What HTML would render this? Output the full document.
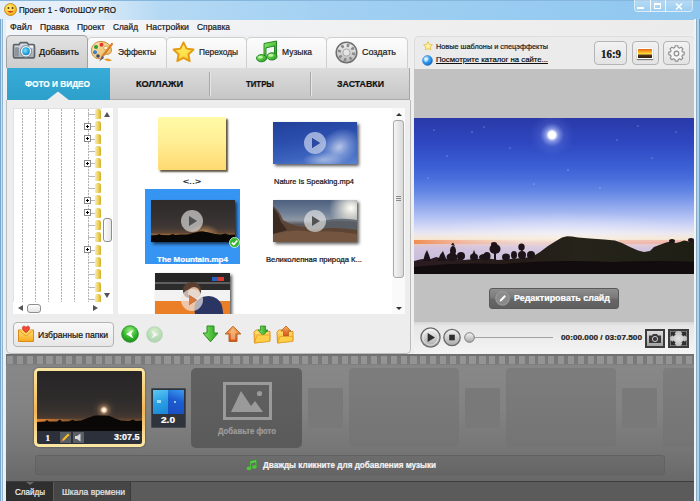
<!DOCTYPE html>
<html lang="ru">
<head>
<meta charset="utf-8">
<title>Проект 1 - ФотоШОУ PRO</title>
<style>
*{box-sizing:border-box;margin:0;padding:0}
html,body{width:700px;height:501px;overflow:hidden;background:#c9dcee}
body{font-family:"Liberation Sans","DejaVu Sans",sans-serif;font-size:11px;color:#111;position:relative}
#win{position:absolute;left:0;top:0;width:700px;height:501px;overflow:hidden}
#win div,#win span,#win svg,#win a{position:absolute;display:block}
.t{white-space:nowrap;line-height:12px;height:12px;transform-origin:0 50%;-webkit-text-stroke:.22px}
.b{font-weight:bold}
/* frame */
#title{left:0;top:0;width:700px;height:20px;background:linear-gradient(90deg,#e4eef9 0,#e6f0fa 12%,#cde4f6 17%,#b4d9f4 23%,#a0cff2 50%,#8fc7ef 100%);border-top:1px solid #86b6dc}
#frameL{left:0;top:19px;width:5.6px;height:482px;background:linear-gradient(90deg,#7aa6c8 0,#7aa6c8 .8px,#d6e5f2 .8px,#c4d9ec 2.4px,#8cb6d9 2.4px,#8cb6d9 3.4px,#eef1f4 3.4px,#e9ecf0 5.6px)}
#frameR{left:694.3px;top:19px;width:5.7px;height:482px;background:linear-gradient(90deg,#f3f4f6 0,#f0f1f4 2.5px,#8caac4 2.5px,#8caac4 3.3px,#a8d6f2 3.3px,#a8d6f2 5.1px,#6f9cbc 5.1px,#6f9cbc 5.7px)}
#menubar{left:5px;top:20px;width:690px;height:15px;background:linear-gradient(90deg,#f3f6fb,#efefef 60%,#ebebeb)}
#client{left:5px;top:35px;width:690px;height:319px;background:#efefef}
.wb{top:0;height:12px;border:1px solid rgba(255,255,255,.5);border-top:none;background:linear-gradient(rgba(255,255,255,.35),rgba(255,255,255,.12))}
/* main tabs */
.mtab{top:37px;height:31px;border:1px solid #cfcfcf;border-bottom:none;border-radius:5px 5px 0 0;background:linear-gradient(#fcfcfc,#eeeeee)}
.mtab.act{top:35px;height:33px;background:linear-gradient(#e2e2e2,#cdcdcd);border-color:#a2a2a2}
.ml{top:46px;font-size:11px;color:#1a1a1a}
/* subtabs */
#subtabs{left:7px;top:68px;width:403px;border-right:1px solid #a4a4a4;height:32px;background:linear-gradient(#dcdcdc,#c6c6c6);border-bottom:1px solid #aaa}
#subact{left:7px;top:68px;width:103px;height:32px;background:linear-gradient(#38acd8,#2c9fca)}
.sdiv{top:72px;width:1px;height:24px;background:#a8a8a8;box-shadow:1px 0 0 #e6e6e6}
.sl{top:78px;font-size:10px;font-weight:bold;color:#111}
/* left panel */
#lpanel{left:6px;top:100px;width:405px;height:254px;background:#ededed;border:1px solid #bcbcbc;border-top:none;border-radius:0 0 5px 5px}
#tree{left:13px;top:108px;width:100px;height:206px;background:#fff;overflow:hidden;border:1px solid #e2e2e2}
#files{left:118px;top:108px;width:287px;height:206px;background:#fff;overflow:hidden}
.vl{top:0;width:1px;height:206px;background:repeating-linear-gradient(#b4b4b4 0,#b4b4b4 2px,#f4f4f4 2px,#f4f4f4 3px)}
.fold{left:82px;width:6px;height:10px;border-radius:2.5px 2.5px 1px 1px;background:linear-gradient(90deg,#f8eeb0,#ecd25e 55%,#d2ac2a);border:0}
.hl{left:75px;width:7px;height:1px;background:#b8b8b8}
.plus{left:71px;width:7px;height:7px;border:1px solid #8a8a8a;background:#fff}
.plus:before{content:"";position:absolute;left:1px;top:2px;width:3px;height:1px;background:#000}
.plus:after{content:"";position:absolute;left:2px;top:1px;width:1px;height:3px;background:#000}
.thumb{box-shadow:2px 2px 3px rgba(0,0,0,.65)}
.play{width:22px;height:22px;border-radius:11px;background:rgba(235,235,235,.62)}
.play:after{content:"";position:absolute;left:8px;top:6px;border-left:8px solid rgba(70,70,70,.9);border-top:5px solid transparent;border-bottom:5px solid transparent}
.fl{font-size:9px;color:#111;top:0}
.btn{border:1px solid #b4b4b4;border-radius:4px;background:linear-gradient(#f8f8f8,#e6e6e6)}
/* right panel */
#rhead{left:414px;top:36px;width:281px;height:34px;background:#ebebeb;border-radius:5px 5px 0 0;border:1px solid #dcdcdc;border-bottom:none}
#rgray{left:414px;top:69px;width:281px;height:253px;background:#c1c1c1}
#rctrl{left:414px;top:322px;width:281px;height:32px;background:linear-gradient(#d6d6d6 0,#e6e6e6 12%,#f4f4f4 100%)}
/* filmstrip */
#film{left:5.5px;top:354px;width:689px;height:127px;background:linear-gradient(#8a8989 0,#838282 45%,#777676 75%,#696868 100%)}
#perf{left:5.5px;top:354px;width:689px;height:12px;background:linear-gradient(#6e6d6d,#7b7a7a 30%,#7b7a7a 80%,#8a8989)}
#perf2{left:6.5px;top:356px;width:689px;height:8px;background:repeating-linear-gradient(90deg,#959494 0,#959494 6.2px,transparent 6.2px,transparent 9.84px)}
.phL{top:368px;width:110px;height:79px;border-radius:4px;background:linear-gradient(#7e7d7d,#757474)}
.phS{top:388px;width:35px;height:40px;border-radius:2px;background:#7a7979}
#music{left:35px;top:455px;width:630px;height:20px;border-radius:3px;background:linear-gradient(#6e6d6d,#666565);border:1px solid #626161}
#bottom{left:5.5px;top:481px;width:689px;height:20px;background:#5c5b5b;border-top:1px solid #3f3e3e}
</style>
</head>
<body>
<div id="win">
<!-- window frame -->
<div id="title"></div>
<svg style="left:4px;top:3px" width="13" height="13" viewBox="0 0 13 13"><defs><radialGradient id="sm" cx=".4" cy=".35" r=".7"><stop offset="0" stop-color="#fff27a"/><stop offset="1" stop-color="#f2a80a"/></radialGradient></defs><circle cx="6.5" cy="6.5" r="6" fill="url(#sm)" stroke="#c07a08" stroke-width=".8"/><circle cx="4.5" cy="5" r="1" fill="#5a3a05"/><circle cx="8.5" cy="5" r="1" fill="#5a3a05"/><path d="M3.5 8 Q6.5 11.5 9.5 8 Z" fill="#d8301c"/></svg>
<span class="t " style="left:19px;top:4.1px;font-size:9px;color:#111;transform:scaleX(0.8931);">Проект 1 - ФотоШОУ PRO</span>
<div class="wb" style="left:634px;width:17px;border-radius:0 0 0 4px"></div>
<div class="wb" style="left:650px;width:16px"></div>
<div class="wb" style="left:665px;width:28px;border-radius:0 0 4px 0"></div>
<div style="left:637px;top:7px;width:7px;height:2px;background:#fff"></div>
<div style="left:654px;top:3px;width:7px;height:6px;border:1.5px solid #fff;border-top-width:2px"></div>
<svg style="left:675px;top:3px" width="8" height="7" viewBox="0 0 8 7"><path d="M1 .5 L7 6.5 M7 .5 L1 6.5" stroke="#fff" stroke-width="1.6"/></svg>
<div id="menubar"></div>
<span class="t " style="left:10px;top:21.2px;font-size:9px;color:#1a1a1a;transform:scaleX(0.9936);">Файл</span>
<span class="t " style="left:40px;top:21.2px;font-size:9px;color:#1a1a1a;transform:scaleX(0.9538);">Правка</span>
<span class="t " style="left:77px;top:21.2px;font-size:9px;color:#1a1a1a;transform:scaleX(0.9442);">Проект</span>
<span class="t " style="left:113px;top:21.2px;font-size:9px;color:#1a1a1a;transform:scaleX(0.9243);">Слайд</span>
<span class="t " style="left:146px;top:21.2px;font-size:9px;color:#1a1a1a;transform:scaleX(0.9742);">Настройки</span>
<span class="t " style="left:197px;top:21.2px;font-size:9px;color:#1a1a1a;transform:scaleX(0.9345);">Справка</span>
<div id="client"></div>

<!-- main tabs -->
<div class="mtab" style="left:87px;width:80px"></div>
<div class="mtab" style="left:166px;width:81px"></div>
<div class="mtab" style="left:246px;width:81px"></div>
<div class="mtab" style="left:326px;width:82px"></div>
<div class="mtab act" style="left:6px;width:82px"></div>
<span class="t " style="left:39px;top:45.7px;font-size:8.6px;color:#111;transform:scaleX(1.0531);">Добавить</span>
<span class="t " style="left:118px;top:45.7px;font-size:8.6px;color:#222;transform:scaleX(0.9724);">Эффекты</span>
<span class="t " style="left:199px;top:45.7px;font-size:8.6px;color:#222;transform:scaleX(0.9674);">Переходы</span>
<span class="t " style="left:282px;top:45.7px;font-size:8.6px;color:#222;transform:scaleX(0.9866);">Музыка</span>
<span class="t " style="left:362px;top:45.7px;font-size:8.6px;color:#222;transform:scaleX(1.0407);">Создать</span>
<!-- camera -->
<svg style="left:12px;top:40.5px" width="24" height="18.5" viewBox="0 0 24 18" preserveAspectRatio="none">
<defs><linearGradient id="cam" x1="0" y1="0" x2="0" y2="1"><stop offset="0" stop-color="#dde2e8"/><stop offset="1" stop-color="#a4acb6"/></linearGradient>
<radialGradient id="lens" cx=".4" cy=".4" r=".7"><stop offset="0" stop-color="#7fe0ff"/><stop offset=".6" stop-color="#2aa6e0"/><stop offset="1" stop-color="#1a6fa8"/></radialGradient></defs>
<path d="M2.5 3.5 H7 L8.5 1.5 H15 L16.5 3.5 H21 Q22.5 3.5 22.5 5 V14.5 Q22.5 16.5 20.5 16.5 H3.5 Q1.5 16.5 1.5 14.5 V5 Q1.5 3.5 2.5 3.5 Z" fill="url(#cam)" stroke="#5e646c" stroke-width="1.7"/>
<rect x="3" y="6" width="4" height="9" rx="1" fill="#8f959d"/>
<circle cx="14" cy="10" r="5.6" fill="#f4f6f8" stroke="#8a9098" stroke-width="1"/>
<circle cx="14" cy="10" r="3.8" fill="url(#lens)"/>
<rect x="17.5" y="4.5" width="3.5" height="2" fill="#fff" opacity=".8"/>
</svg>
<!-- palette -->
<svg style="left:90px;top:40px" width="24" height="23" viewBox="0 0 24 23">
<defs><linearGradient id="pal" x1="0" y1="0" x2="1" y2="1"><stop offset="0" stop-color="#fbe7b0"/><stop offset="1" stop-color="#e9b45c"/></linearGradient></defs>
<path d="M11 1.5 C4 1.5 1 7 1.5 11.5 C2 16.5 6.5 19.5 10.5 18.5 C13 18 12 15.5 13.5 14.5 C15.5 13.5 18 15.5 20.5 13 C23.5 9.5 19.5 1.5 11 1.5 Z" fill="url(#pal)" stroke="#c98a32" stroke-width="1"/>
<circle cx="6" cy="7" r="2" fill="#2c9c3c"/><circle cx="11.5" cy="4.8" r="2" fill="#e03a2a"/><circle cx="5" cy="12.2" r="2" fill="#3a7fd6"/><circle cx="8" cy="16" r="1.8" fill="#3a4a7a"/>
<ellipse cx="16" cy="8" rx="2.3" ry="1.8" fill="#fff4d8" stroke="#c98a32" stroke-width=".6"/>
<path d="M22 4 L12 17" stroke="#d9822a" stroke-width="2.2" stroke-linecap="round"/>
<path d="M12.5 16 L9 21.5 L14 18 Z" fill="#5a5a6a"/>
<path d="M14 19.5 Q18 17 22 20.5 Q18 22.5 14 19.5Z" fill="#e89a2a"/>
</svg>
<!-- star -->
<svg style="left:172px;top:40.5px" width="23" height="22" viewBox="0 0 25 24">
<defs><linearGradient id="st" x1="0" y1="0" x2="0" y2="1"><stop offset="0" stop-color="#fff27a"/><stop offset="1" stop-color="#f7b818"/></linearGradient></defs>
<path d="M12.5 1.5 L15.9 8.3 L23.4 9.3 L18 14.6 L19.3 22 L12.5 18.5 L5.7 22 L7 14.6 L1.6 9.3 L9.1 8.3 Z" fill="url(#st)" stroke="#e59a12" stroke-width="2" stroke-linejoin="round"/>
<path d="M12.5 5 L14.7 9.6 L19.6 10.3 L16 13.7 L16.9 18.6 L12.5 16.3 L8.1 18.6 L9 13.7 L5.4 10.3 L10.3 9.6 Z" fill="#ffec5a" opacity=".6"/>
</svg>
<!-- music -->
<svg style="left:255px;top:40px" width="25" height="23" viewBox="0 0 25 23">
<defs><linearGradient id="mu" x1="0" y1="0" x2="1" y2="1"><stop offset="0" stop-color="#8ff06a"/><stop offset="1" stop-color="#1e9a1a"/></linearGradient></defs>
<path d="M9 3.5 L21.5 1 V16.5 H19.5 V6 L11 7.8 V18.5 H9 Z" fill="url(#mu)" stroke="#157a14" stroke-width=".9" stroke-linejoin="round"/>
<ellipse cx="6.5" cy="18.2" rx="5" ry="3.6" fill="url(#mu)" stroke="#157a14" stroke-width=".9"/>
<ellipse cx="17" cy="16.4" rx="5" ry="3.6" fill="url(#mu)" stroke="#157a14" stroke-width=".9"/>
<ellipse cx="5.5" cy="17.2" rx="2.4" ry="1.3" fill="#d6ffc0" opacity=".8"/>
<ellipse cx="16" cy="15.4" rx="2.4" ry="1.3" fill="#d6ffc0" opacity=".8"/>
</svg>
<!-- reel -->
<svg style="left:335px;top:41px" width="23" height="23" viewBox="0 0 23 23">
<defs><linearGradient id="re" x1="0" y1="0" x2="0" y2="1"><stop offset="0" stop-color="#f2f2f2"/><stop offset="1" stop-color="#b9b9b9"/></linearGradient></defs>
<circle cx="11.5" cy="11.5" r="10.3" fill="url(#re)" stroke="#6e6e6e" stroke-width="1.5"/>
<circle cx="11.5" cy="11.5" r="7.2" fill="none" stroke="#8a8a8a" stroke-width="3.2" stroke-dasharray="2.6 3.05"/>
<circle cx="11.5" cy="11.5" r="3.6" fill="#e4e4e4" stroke="#9a9a9a" stroke-width=".8"/>
</svg>


<!-- sub tabs -->
<div id="subtabs"></div>
<div id="subact"></div>
<div class="sdiv" style="left:209px"></div>
<div class="sdiv" style="left:310px"></div>
<span class="t b" style="left:25px;top:78px;font-size:8.7px;color:#fff;transform:scaleX(0.9509);">ФОТО И ВИДЕО</span>
<span class="t b" style="left:136px;top:78px;font-size:8.7px;color:#111;transform:scaleX(1.0584);">КОЛЛАЖИ</span>
<span class="t b" style="left:246px;top:78px;font-size:8.7px;color:#111;transform:scaleX(0.8982);">ТИТРЫ</span>
<span class="t b" style="left:337px;top:78px;font-size:8.7px;color:#111;transform:scaleX(1.0125);">ЗАСТАВКИ</span>

<!-- left panel -->
<div id="lpanel"></div>
<svg style="left:46px;top:91px" width="24" height="10" viewBox="0 0 24 10"><path d="M0 10 L0.5 9.4 L12 0.4 L23.5 9.4 L24 10 Z" fill="#ededed"/></svg>
<div id="tree">
<div class="vl" style="left:8px"></div>
<div class="vl" style="left:21px"></div>
<div class="vl" style="left:34px"></div>
<div class="vl" style="left:47px"></div>
<div class="vl" style="left:60px"></div>
<div class="vl" style="left:74px"></div>
</div>
<div id="treerows" style="left:13px;top:0;width:100px;height:314px;overflow:hidden;clip-path:inset(108px 0 0 0)">
<div class="fold" style="top:109.0px"></div>
<div class="hl" style="top:114.0px"></div>
<div class="fold" style="top:121.3px"></div>
<div class="hl" style="top:126.3px;left:78px;width:4px"></div>
<div class="plus" style="top:122.8px"></div>
<div class="fold" style="top:133.7px"></div>
<div class="hl" style="top:138.7px;left:78px;width:4px"></div>
<div class="plus" style="top:135.2px"></div>
<div class="fold" style="top:146.0px"></div>
<div class="hl" style="top:151.0px"></div>
<div class="fold" style="top:158.3px"></div>
<div class="hl" style="top:163.3px;left:78px;width:4px"></div>
<div class="plus" style="top:159.8px"></div>
<div class="fold" style="top:170.7px"></div>
<div class="hl" style="top:175.7px"></div>
<div class="fold" style="top:183.0px"></div>
<div class="hl" style="top:188.0px"></div>
<div class="fold" style="top:195.3px"></div>
<div class="hl" style="top:200.3px;left:78px;width:4px"></div>
<div class="plus" style="top:196.8px"></div>
<div class="fold" style="top:207.6px"></div>
<div class="hl" style="top:212.6px;left:78px;width:4px"></div>
<div class="plus" style="top:209.1px"></div>
<div class="fold" style="top:220.0px"></div>
<div class="hl" style="top:225.0px"></div>
<div class="fold" style="top:232.3px"></div>
<div class="hl" style="top:237.3px"></div>
<div class="fold" style="top:244.6px"></div>
<div class="hl" style="top:249.6px;left:78px;width:4px"></div>
<div class="plus" style="top:246.1px"></div>
<div class="fold" style="top:257.0px"></div>
<div class="hl" style="top:262.0px"></div>
<div class="fold" style="top:269.3px"></div>
<div class="hl" style="top:274.3px"></div>
<div class="fold" style="top:281.6px"></div>
<div class="hl" style="top:286.6px"></div>
<div class="fold" style="top:293.9px"></div>
<div class="hl" style="top:298.9px"></div>
<div class="fold" style="top:306.3px"></div>
<div class="hl" style="top:311.3px"></div>
</div>
<!-- tree scrollbars -->
<div style="left:102px;top:108px;width:11px;height:195px;background:#fff"></div>
<div style="left:13px;top:302px;width:100px;height:12px;background:#fff"></div>
<div style="left:104px;top:112px;border-bottom:5px solid #555;border-left:3.5px solid transparent;border-right:3.5px solid transparent"></div>
<div style="left:104px;top:293px;border-top:5px solid #555;border-left:3.5px solid transparent;border-right:3.5px solid transparent"></div>
<div style="left:103px;top:218px;width:9px;height:24px;border:1px solid #8e8e8e;border-radius:3px;background:linear-gradient(90deg,#fdfdfd,#e4e4e4)"></div>
<div style="left:18px;top:305px;border-right:5px solid #555;border-top:3.5px solid transparent;border-bottom:3.5px solid transparent"></div>
<div style="left:93px;top:305px;border-left:5px solid #555;border-top:3.5px solid transparent;border-bottom:3.5px solid transparent"></div>
<div style="left:27px;top:304px;width:14px;height:9px;border:1px solid #8e8e8e;border-radius:3px;background:linear-gradient(#fdfdfd,#e4e4e4)"></div>

<div id="files">
<!-- folder -->
<div class="thumb" style="left:40px;top:9px;width:68px;height:53px;background:linear-gradient(#fffaa6 0,#ffef96 45%,#ffd970 100%);box-shadow:2px 2px 2px rgba(40,30,0,.75);border-radius:1px"></div>
<!-- selection -->
<div style="left:27px;top:81px;width:95px;height:75px;background:#3694f3"></div>
<!-- mountain thumb -->
<div class="thumb" style="left:33px;top:92px;width:84px;height:42px;overflow:hidden;background:linear-gradient(#2e2a2a 0,#353130 40%,#403835 66%,#5e4636 78%,#98683a 83%,#1a1512 88%,#0b0908 100%)">
<div style="left:38px;top:24px;width:30px;height:18px;border-radius:50%;background:radial-gradient(closest-side,rgba(255,220,170,.95) 0,rgba(240,170,100,.5) 25%,rgba(200,120,60,0) 100%)"></div>
<svg style="left:0;top:30px" width="84" height="12" viewBox="0 0 84 12"><path d="M0 5.5 L6 5 L8 4 L10 5 L18 5.2 L22 4 L24 5 L30 4.6 L36 4.4 L42 3 L48 1.6 L52 1.2 L58 2.6 L64 4 L70 4.6 L74 3.6 L78 4.8 L84 4.4 V12 H0 Z" fill="#0a0807"/></svg>
</div>
<div class="play" style="left:63px;top:102px"></div>
<svg style="left:111px;top:129px" width="11" height="11" viewBox="0 0 11 11"><circle cx="5.5" cy="5.5" r="5" fill="#35b52e" stroke="#e8f8e4" stroke-width=".8"/><path d="M2.8 5.6 L4.8 7.6 L8.3 3.4" fill="none" stroke="#fff" stroke-width="1.6"/></svg>
<!-- nature thumb -->
<div class="thumb" style="left:155px;top:14px;width:84px;height:42px;overflow:hidden;background:linear-gradient(170deg,#22409a 0,#2b4fae 40%,#3b63bd 70%,#5d83cf 100%)">
<div style="left:44px;top:8px;width:44px;height:34px;border-radius:50%;background:radial-gradient(closest-side,rgba(225,232,248,.75) 0,rgba(190,205,238,.4) 50%,rgba(150,170,220,0) 100%);transform:rotate(-35deg)"></div>
<div style="left:30px;top:30px;width:40px;height:16px;border-radius:50%;background:radial-gradient(closest-side,rgba(215,225,245,.6) 0,rgba(150,170,220,0) 100%)"></div>
</div>
<div class="play" style="left:186px;top:24px;background:rgba(200,210,235,.72)"></div>
<div style="left:194px;top:30px;border-left:8px solid #2a49a6;border-top:5px solid transparent;border-bottom:5px solid transparent"></div>
<!-- priroda thumb -->
<div class="thumb" style="left:155px;top:92px;width:84px;height:42px;overflow:hidden;background:linear-gradient(#4d5f7e 0,#6f7f97 30%,#8e97a3 48%,#5b5a5e 58%,#6b4d3a 75%,#4a3124 100%)">
<div style="left:56px;top:-12px;width:44px;height:40px;border-radius:50%;background:radial-gradient(closest-side,rgba(255,255,255,1) 0,rgba(255,250,235,.8) 25%,rgba(230,225,220,0) 100%)"></div>
<svg style="left:0;top:0" width="84" height="42" viewBox="0 0 84 42"><path d="M0 6 Q6 10 10 20 Q20 26 30 27 L44 24 Q60 19 84 22 V42 H0 Z" fill="#5b4232" opacity=".9"/><path d="M34 26 Q56 16 84 20 V30 Q60 26 34 30Z" fill="#59616b" opacity=".85"/><path d="M0 8 Q5 12 8 22 L14 30 L0 34Z" fill="#3a2a20"/><path d="M0 34 Q20 28 40 32 Q60 30 84 34 V42 H0Z" fill="#7a5a44" opacity=".8"/></svg>
</div>
<div class="play" style="left:186px;top:102px"></div>
<!-- third thumb -->
<div class="thumb" style="left:37px;top:165px;width:75px;height:56px;overflow:hidden;background:linear-gradient(#262626 0,#262626 8.5px,#5f5f5f 9px,#5f5f5f 11px,#2c2c2c 11.5px,#2c2c2c 16.5px,#f2f2f2 17px,#f2f2f2 27.5px,#ea7f27 28px,#ea7f27 100%)">
<div style="left:57px;top:4px;width:6px;height:4px;background:#2a5fc0"></div><div style="left:63px;top:4px;width:6px;height:4px;background:#d63a30"></div>
<div style="left:28px;top:9px;width:18px;height:16px;border-radius:50% 50% 40% 40%;background:#5a3f30"></div>
<div style="left:33px;top:14px;width:12px;height:12px;border-radius:50%;background:#d8b49a"></div>
<div style="left:40px;top:23px;width:28px;height:34px;border-radius:12px 14px 0 0;background:#2b3564;transform:rotate(-8deg)"></div>
</div>
<div class="play" style="left:63px;top:181px;background:rgba(240,230,225,.7)"></div>
<div style="left:71px;top:187px;border-left:8px solid #d9783a;border-top:5px solid transparent;border-bottom:5px solid transparent"></div>
<!-- scrollbar -->
<div style="left:274px;top:0;width:13px;height:206px;background:#fafafa"></div>
<div style="left:275px;top:12px;width:11px;height:158px;border:1px solid #a9a9a9;border-radius:3px;background:linear-gradient(90deg,#f4f4f4,#dadada)"></div>
<div style="left:278px;top:88px;width:5px;height:1px;background:#8a8a8a;box-shadow:0 2px 0 #8a8a8a,0 4px 0 #8a8a8a"></div>
<div style="left:277.5px;top:5px;border-bottom:3px solid #333;border-left:3px solid transparent;border-right:3px solid transparent"></div>
<div style="left:277.5px;top:199px;border-top:3px solid #333;border-left:3px solid transparent;border-right:3px solid transparent"></div>

</div>
<span class="t " style="left:183px;top:176.3px;font-size:7.9px;color:#111;transform:scaleX(1.3226);">&lt;..&gt;</span>
<span class="t " style="left:274px;top:176.3px;font-size:7.9px;color:#111;transform:scaleX(0.9450);">Nature Is Speaking.mp4</span>
<span class="t b" style="left:157px;top:254.3px;font-size:7.9px;color:#fff;transform:scaleX(1.0186);">The Mountain.mp4</span>
<span class="t " style="left:266px;top:254.3px;font-size:7.9px;color:#111;transform:scaleX(0.9729);">Великолепная природа К...</span>
<!-- left bottom toolbar -->
<div class="btn" style="left:13px;top:322px;width:101px;height:25px"></div>
<svg style="left:17px;top:325px" width="18" height="18" viewBox="0 0 18 18">
<defs><linearGradient id="fo" x1="0" y1="0" x2="0" y2="1"><stop offset="0" stop-color="#ffe27a"/><stop offset="1" stop-color="#f6a81c"/></linearGradient></defs>
<path d="M1.5 5 H16.5 V16.5 H1.5 Z" fill="url(#fo)" stroke="#d98a14" stroke-width="1"/>
<path d="M1.5 5 L9 11 L16.5 5" fill="#ffd35a" stroke="#e69a1c" stroke-width=".9"/>
<path d="M9 7.6 C4.5 4.6 4.8 1.2 7 1.2 C8.2 1.2 8.8 2 9 2.6 C9.2 2 9.8 1.2 11 1.2 C13.2 1.2 13.5 4.6 9 7.6Z" fill="#ef4a3a" stroke="#c4281c" stroke-width=".7"/>
</svg>
<span class="t " style="left:38px;top:329.4px;font-size:8.6px;color:#111;transform:scaleX(1.0002);">Избранные папки</span>
<svg style="left:121px;top:325px" width="18" height="18" viewBox="0 0 18 18">
<defs><radialGradient id="gb" cx=".5" cy=".3" r=".8"><stop offset="0" stop-color="#9af07e"/><stop offset=".55" stop-color="#2fb42a"/><stop offset="1" stop-color="#157a14"/></radialGradient></defs>
<circle cx="9" cy="9" r="8.3" fill="url(#gb)" stroke="#1b8a1a" stroke-width=".8"/>
<path d="M12.5 4.5 L5 9 L12.5 13.5 L10.3 9 Z" fill="#fff"/>
</svg>
<svg style="left:146px;top:326px;opacity:.28" width="17" height="17" viewBox="0 0 18 18">
<circle cx="9" cy="9" r="8.3" fill="url(#gb)" stroke="#1b8a1a" stroke-width=".8"/>
<path d="M5.5 4.5 L13 9 L5.5 13.5 L7.7 9 Z" fill="#fff"/>
</svg>
<!-- down arrow -->
<svg style="left:202px;top:325px" width="17" height="18" viewBox="0 0 17 18">
<defs><linearGradient id="ga" x1="0" y1="0" x2="1" y2="0"><stop offset="0" stop-color="#7fe35f"/><stop offset="1" stop-color="#2a9e22"/></linearGradient>
<linearGradient id="oa" x1="0" y1="0" x2="0" y2="1"><stop offset="0" stop-color="#f7b25a"/><stop offset="1" stop-color="#d94f1a"/></linearGradient></defs>
<path d="M5 1 H12 V8 H16 L8.5 16.8 L1 8 H5 Z" fill="url(#ga)" stroke="#2a8a22" stroke-width="1" stroke-linejoin="round"/>
</svg>
<!-- up arrow -->
<svg style="left:224px;top:325px" width="18" height="18" viewBox="0 0 18 18">
<path d="M9 1.2 L16.8 9 H13 V16.5 H5 V9 H1.2 Z" fill="url(#oa)" stroke="#b8641e" stroke-width="1" stroke-linejoin="round"/>
<path d="M9 3.6 L13 8 H11 V14.5 H7 V8 H5 Z" fill="#f9d0a0" opacity=".55"/>
</svg>
<!-- folder down -->
<svg style="left:253px;top:325px" width="18" height="19" viewBox="0 0 18 19">
<path d="M1 7 L3 5 H7 L8 6.5 H17 V16 L1.5 18 Z" fill="url(#fo)" stroke="#d98a14" stroke-width=".9"/>
<path d="M7.5 1 H12.5 V5 H15 L10 10.5 L5 5 H7.5 Z" fill="url(#ga)" stroke="#2a8a22" stroke-width=".8"/>
<path d="M1.5 18 L4 10 H17 L16.5 16.5 Z" fill="#ffd24a" stroke="#e09a1c" stroke-width=".7" opacity=".9"/>
</svg>
<!-- folder up -->
<svg style="left:276px;top:325px" width="18" height="19" viewBox="0 0 18 19">
<path d="M1 7 L3 5 H7 L8 6.5 H17 V16 L1.5 18 Z" fill="url(#fo)" stroke="#d98a14" stroke-width=".9"/>
<path d="M10 1 L15 6 H12.5 V11 H7.5 V6 H5 Z" fill="url(#oa)" stroke="#b8641e" stroke-width=".8"/>
<path d="M1.5 18 L4 11.5 H17 L16.5 16.5 Z" fill="#ffd24a" stroke="#e09a1c" stroke-width=".7" opacity=".9"/>
</svg>


<!-- right panel -->
<div id="rhead"></div>
<div id="rgray"></div>
<div id="rctrl"></div>
<!-- header icons -->
<svg style="left:422.5px;top:41px" width="10" height="10" viewBox="0 0 12 12"><path d="M6 .8 L7.6 4.2 L11.3 4.6 L8.6 7.1 L9.3 10.8 L6 9 L2.7 10.8 L3.4 7.1 L.7 4.6 L4.4 4.2 Z" fill="#fff3a0" stroke="#e2b93a" stroke-width=".9" stroke-linejoin="round"/></svg>
<svg style="left:422px;top:54.5px" width="11" height="11" viewBox="0 0 12 12"><defs><radialGradient id="gl" cx=".35" cy=".3" r=".8"><stop offset="0" stop-color="#d8f2ff"/><stop offset=".45" stop-color="#3aa4f0"/><stop offset="1" stop-color="#0a58c0"/></radialGradient></defs><circle cx="6" cy="6" r="5.4" fill="url(#gl)" stroke="#2a78d0" stroke-width=".6"/><path d="M2 4 Q5 2 7 4 Q6 7 3.5 8 Z" fill="#fff" opacity=".55"/></svg>
<span class="t " style="left:436px;top:40.9px;font-size:7.8px;color:#222;transform:scaleX(0.9393);">Новые шаблоны и спецэффекты</span>
<span class="t " style="left:436px;top:54px;font-size:7.8px;color:#111;text-decoration:underline;transform:scaleX(0.9921);">Посмотрите каталог на сайте...</span>
<div class="btn" style="left:594px;top:41px;width:33px;height:24px;background:linear-gradient(#f2f2f2,#e3e3e3)"></div>
<div class="btn" style="left:632px;top:41px;width:27px;height:24px;background:linear-gradient(#f2f2f2,#e3e3e3)"></div>
<div class="btn" style="left:663px;top:41px;width:27px;height:24px;background:linear-gradient(#f2f2f2,#e3e3e3)"></div>
<span class="t b" style="left:601px;top:48px;font-size:11.5px;color:#111;font-family:'Liberation Serif','DejaVu Serif',serif;transform:scaleX(0.9481);">16:9</span>
<div style="left:637px;top:48px;width:16px;height:11px;border:1px solid #fff;box-shadow:0 1px 1px rgba(0,0,0,.45);background:linear-gradient(#e8641a 0,#f89a1c 25%,#ffd73a 50%,#ffe96a 58%,#5a3a14 64%,#2a1c10 100%)"></div>
<svg style="left:667px;top:44px" width="19" height="19" viewBox="0 0 19 19"><g transform="translate(9.5 9.5)"><path d="M-1.5 -8 H1.5 L2 -5.9 L3.6 -5.2 L5.4 -6.4 L7.5 -4.3 L6.3 -2.5 L6.9 -.9 L9 -.5 V2.5 L6.9 2.9 L6.2 4.5 L7.4 6.3 L5.3 8.4 L3.5 7.2 L1.9 7.9 L1.5 9.9 H-1.5 L-1.9 7.9 L-3.5 7.2 L-5.3 8.4 L-7.4 6.3 L-6.2 4.5 L-6.9 2.9 L-9 2.5 V-.5 L-6.9 -.9 L-6.3 -2.5 L-7.5 -4.3 L-5.4 -6.4 L-3.6 -5.2 L-2 -5.9 Z" transform="translate(0 -.9) scale(.86)" fill="#f6f6f6" stroke="#8c8c8c" stroke-width="1.3" stroke-linejoin="round"/><circle cx="0" cy="0" r="2.3" fill="#f2f2f2" stroke="#8c8c8c" stroke-width="1.2"/></g></svg>
<!-- preview image -->
<svg style="left:414px;top:117.5px" width="281" height="156" viewBox="0 0 281 156">
<defs>
<linearGradient id="sky" x1="0" y1="0" x2="0" y2="1">
<stop offset="0" stop-color="#2939a8"/><stop offset=".157" stop-color="#2e47c0"/><stop offset=".314" stop-color="#3c5fd4"/><stop offset=".39" stop-color="#4a6fdc"/><stop offset=".47" stop-color="#6286e4"/><stop offset=".55" stop-color="#88a2ec"/><stop offset=".63" stop-color="#b0bff3"/><stop offset=".69" stop-color="#cfd6f6"/><stop offset=".74" stop-color="#eae6f0"/><stop offset=".775" stop-color="#f6e8d2"/><stop offset=".80" stop-color="#ecc8c0"/><stop offset=".83" stop-color="#d4c4dc"/><stop offset=".92" stop-color="#c6bedc"/><stop offset="1" stop-color="#b0a8cc"/></linearGradient>
<radialGradient id="moon" cx=".5" cy=".5" r=".5"><stop offset="0" stop-color="#fff"/><stop offset=".16" stop-color="#fff"/><stop offset=".28" stop-color="#c8d2ff" stop-opacity=".6"/><stop offset=".55" stop-color="#8fa4f0" stop-opacity=".16"/><stop offset="1" stop-color="#6f88e0" stop-opacity="0"/></radialGradient>
<radialGradient id="hz" cx=".5" cy=".5" r=".5"><stop offset="0" stop-color="#fff" stop-opacity=".35"/><stop offset="1" stop-color="#fff" stop-opacity="0"/></radialGradient>
<linearGradient id="orl" x1="0" y1="0" x2="1" y2="0"><stop offset="0" stop-color="#f08a4a" stop-opacity=".95"/><stop offset=".5" stop-color="#f3a888" stop-opacity=".55"/><stop offset="1" stop-color="#f3b28a" stop-opacity="0"/></linearGradient>
<linearGradient id="gnd" x1="0" y1="0" x2="1" y2="0"><stop offset="0" stop-color="#2c1c22"/><stop offset=".4" stop-color="#241c18"/><stop offset=".6" stop-color="#26241a"/><stop offset="1" stop-color="#1e1e14"/></linearGradient>
</defs>
<rect width="281" height="156" fill="url(#sky)"/>
<ellipse cx="150" cy="116" rx="135" ry="22" fill="url(#hz)"/>
<rect x="0" y="122" width="105" height="4" fill="url(#orl)"/>
<rect x="205" y="122" width="76" height="4" fill="#ef9a88" opacity=".4"/>
<circle cx="138" cy="17" r="22" fill="url(#moon)"/>
<g fill="#fff" opacity=".75"><circle cx="20" cy="12" r=".5"/><circle cx="58" cy="14" r=".6"/><circle cx="70" cy="9" r=".5"/><circle cx="33" cy="38" r=".5"/><circle cx="96" cy="30" r=".5"/><circle cx="154" cy="52" r=".6"/><circle cx="203" cy="22" r=".5"/><circle cx="238" cy="40" r=".5"/><circle cx="262" cy="14" r=".5"/><circle cx="120" cy="66" r=".5"/><circle cx="186" cy="70" r=".5"/><circle cx="14" cy="60" r=".5"/><circle cx="224" cy="8" r=".5"/></g>
<path d="M0 143 L8 141 L14 142 L22 139 L30 141 L40 140 L50 142 L60 141 L72 140 L84 142 L96 141 L108 140 L118 139 L126 134 L134 128 L142 123 L148 119.5 L153 118.2 L158 118.6 L164 119.6 L176 120.4 L190 121.4 L201 122.6 L208 125 L216 129 L224 132.5 L230 134 L236 133 L240 129 L244 127.5 L248 126 L252 124.5 L257 123.5 L262 125 L266 124 L270 122.5 L275 123.5 L281 122.5 V156 H0 Z" fill="url(#gnd)"/>
<g fill="#1c1418">
<path d="M9 143 L11 136 L13 132 L15 137 L17 143Z"/><path d="M24 143 L26 137 L29 133 L31 138 L33 143Z"/>
<ellipse cx="39" cy="133" rx="3" ry="5"/><ellipse cx="38" cy="139" rx="5.5" ry="4"/><path d="M37 127 L39 124.5 L41 128Z"/>
<ellipse cx="47" cy="138" rx="4" ry="4"/><ellipse cx="60" cy="139" rx="4" ry="3.5"/><path d="M57 140 L60 132 L63 140Z"/>
<ellipse cx="73" cy="138" rx="3.5" ry="4"/>
<ellipse cx="81" cy="131" rx="5.5" ry="5"/><ellipse cx="80" cy="126.5" rx="3" ry="2.4"/><rect x="80" y="132" width="2" height="10"/>
<ellipse cx="70" cy="139" rx="5" ry="3"/><ellipse cx="92" cy="139" rx="4" ry="3.5"/><ellipse cx="100" cy="137" rx="3" ry="4"/>
<ellipse cx="107.5" cy="129" rx="3.2" ry="3.6"/><rect x="107" y="130" width="1.6" height="11"/><ellipse cx="108" cy="137" rx="4" ry="4"/>
<ellipse cx="117" cy="137" rx="4" ry="4"/>
<ellipse cx="258" cy="123" rx="3" ry="2"/><ellipse cx="277" cy="122" rx="3" ry="2"/>
</g>
<path d="M0 149 Q40 144 90 146 Q140 141 200 144 Q250 142 281 144 V156 H0Z" fill="#120c0e"/>
</svg>
<!-- edit button -->
<div style="left:489px;top:288px;width:130px;height:21px;border-radius:3px;border:1px solid #5a5a5a;background:linear-gradient(#8e8e8e 0,#7a7a7a 45%,#676767 55%,#5f5f5f 100%)"></div>
<svg style="left:495px;top:291px" width="15" height="15" viewBox="0 0 15 15"><circle cx="7.5" cy="7.5" r="6.8" fill="#8a8a8a" stroke="#a4a4a4" stroke-width=".8"/><path d="M4.6 10.6 L5.2 8.6 L9.6 4 L11 5.4 L6.6 10 Z" fill="#fff"/></svg>
<span class="t b" style="left:514px;top:292.4px;font-size:9.2px;color:#fff;transform:scaleX(0.9717);">Редактировать слайд</span>
<!-- controls -->
<svg style="left:419px;top:326px" width="58" height="24" viewBox="0 0 58 24">
<defs><linearGradient id="cb" x1="0" y1="0" x2="0" y2="1"><stop offset="0" stop-color="#f6f6f6"/><stop offset="1" stop-color="#a8a8a8"/></linearGradient></defs>
<circle cx="11.5" cy="11.5" r="9.6" fill="url(#cb)" stroke="#6a6a6a" stroke-width="1.3"/>
<circle cx="11.5" cy="11.5" r="7.6" fill="none" stroke="#fff" stroke-width=".8" opacity=".6"/>
<path d="M8.6 7 L16 11.5 L8.6 16 Z" fill="#2e2e2e"/>
<circle cx="33" cy="11.5" r="8.2" fill="url(#cb)" stroke="#6a6a6a" stroke-width="1.3"/>
<rect x="30.2" y="8.7" width="5.6" height="5.6" fill="#2e2e2e"/>
<rect x="52" y="11" width="6" height="1" fill="#9a9a9a"/>
<circle cx="50.5" cy="11.5" r="4.8" fill="url(#cb)" stroke="#7a7a7a" stroke-width="1"/>
</svg>
<div style="left:475px;top:337px;width:78px;height:1px;background:#a2a2a2"></div>
<span class="t b" style="left:561px;top:331.6px;font-size:8.1px;color:#222;transform:scaleX(1.0169);">00:00.000 / 03:07.500</span>
<div style="left:645px;top:329px;width:20px;height:19px;border:2px solid #3c3c3c;background:linear-gradient(#dcdcdc,#a2a2a2)"></div>
<svg style="left:648px;top:332px" width="14" height="13" viewBox="0 0 14 13"><path d="M1 3.5 H4 L5 2 H9 L10 3.5 H13 V11 H1 Z" fill="#3a3a3a"/><circle cx="7" cy="7" r="2.6" fill="#3a3a3a" stroke="#c6c6c6" stroke-width="1"/></svg>
<div style="left:668px;top:329px;width:21px;height:19px;border:2px solid #3c3c3c;background:radial-gradient(#e6e6e6,#a8a8a8)"></div>
<svg style="left:670px;top:331px" width="17" height="15" viewBox="0 0 17 15"><path d="M0.5 .5 H6.5 L4.6 2.2 L5.6 3.4 L3.4 5.4 L2.3 4.3 L.5 6 Z M16.5 .5 V6 L14.7 4.3 L13.6 5.4 L11.4 3.4 L12.4 2.2 L10.5 .5 Z M.5 14.5 V9 L2.3 10.7 L3.4 9.6 L5.6 11.6 L4.6 12.8 L6.5 14.5 Z M16.5 14.5 H10.5 L12.4 12.8 L11.4 11.6 L13.6 9.6 L14.7 10.7 L16.5 9 Z" fill="#2e2e2e"/></svg>


<!-- filmstrip -->
<div id="film"></div>
<div id="perf"></div>
<div id="perf2"></div>
<div class="phS" style="left:308px"></div>
<div class="phL" style="left:349px"></div>
<div class="phS" style="left:465px"></div>
<div class="phL" style="left:506px"></div>
<div class="phS" style="left:622px"></div>
<div class="phL" style="left:663px"></div>
<div class="phS" style="left:779px"></div>
<!-- slide 1 -->
<div style="left:33.5px;top:368px;width:111px;height:79px;border-radius:5px;background:linear-gradient(#fbe7a4 0,#f7c96e 35%,#f3b455 55%,#f9dc92 85%,#fbe7a4 100%);box-shadow:0 0 2px rgba(0,0,0,.5)"></div>
<div style="left:36.5px;top:371px;width:105px;height:73px;background:#2b303a;border-radius:2px;overflow:hidden">
<div style="left:0;top:0;width:105px;height:60px;background:linear-gradient(#272526 0,#2e2b2b 45%,#38322f 68%,#4a3a30 78%,#7a5230 83.5%,#9a6230 85.5%,#0c0a09 89%,#080706 100%)"></div>
<div style="left:0;top:47.5px;width:42px;height:5px;background:linear-gradient(90deg,rgba(230,132,48,.95),rgba(226,130,50,0))"></div>
<div style="left:55px;top:27px;width:24px;height:24px;border-radius:50%;background:radial-gradient(closest-side,#fff 0,#ffe9c8 14%,rgba(220,160,110,.4) 34%,rgba(150,105,75,.12) 65%,rgba(150,105,75,0) 100%)"></div>
<svg style="left:0;top:40px" width="105" height="20" viewBox="0 0 105 20"><path d="M0 11 L8 10.6 L10 9 L12 10.6 L20 10.4 L23 8.6 L25 10.4 L32 10.2 L36 8.8 L38 10 L44 9.6 L52 6.4 L58 4.6 L66 4.4 L72 4.8 L78 7.4 L84 9.6 L92 10 L96 8.6 L99 10 L105 9.4 V20 H0 Z" fill="#090807"/></svg>
<div style="left:23px;top:61px;width:11px;height:11px;background:#5a5e66"></div>
<svg style="left:23px;top:61px" width="11" height="11" viewBox="0 0 11 11"><path d="M1.5 9.5 L2.5 7 L8 1.5 L9.5 3 L4 8.5 Z" fill="#f6c21e"/><path d="M1.5 9.5 L2.5 7 L4 8.5Z" fill="#e8762a"/></svg>
<div style="left:36px;top:61px;width:11px;height:11px;background:#5a5e66"></div>
<svg style="left:36px;top:61px" width="11" height="11" viewBox="0 0 11 11"><path d="M2 4 H4 L7.5 1.5 V9.5 L4 7 H2 Z" fill="#d8d8d8"/></svg>
</div>
<span class="t b" style="left:45.5px;top:431.5px;font-size:9px;color:#fff;font-family:'Liberation Serif','DejaVu Serif',serif;transform:scaleX(1.0000);">1</span>
<span class="t b" style="left:114px;top:431.5px;font-size:8.2px;color:#fff;transform:scaleX(1.0983);">3:07.5</span>
<!-- transition -->
<div style="left:150.5px;top:388px;width:35px;height:39.5px;background:#2e333c;border:1px solid #444a54;border-radius:1px"></div>
<div style="left:152.5px;top:390px;width:15px;height:24px;background:linear-gradient(160deg,#5cc8f4 0,#2aa0e4 50%,#1a86d6 100%)"></div>
<div style="left:167.5px;top:390px;width:16px;height:24px;background:linear-gradient(200deg,#3a9cf0 0,#1c5cd0 45%,#1a4cc0 100%)"></div>
<div style="left:157px;top:400px;width:4px;height:3px;background:#bfe6fa;opacity:.8"></div>
<div style="left:174px;top:401px;width:2px;height:2px;background:#bfe0fa;opacity:.8"></div>
<span class="t b" style="left:160.5px;top:415px;font-size:8.2px;color:#fff;transform:scaleX(1.2291);">2.0</span>
<!-- add photo box -->
<div style="left:191px;top:368px;width:111px;height:80px;border-radius:5px;background:linear-gradient(#626161,#5b5a5a)"></div>
<svg style="left:223px;top:382px" width="49" height="38" viewBox="0 0 49 38"><rect x="1.5" y="1.5" width="46" height="35" fill="none" stroke="#9b9a9a" stroke-width="3"/><path d="M8 30 L18 9 L28 24 L32 19 L40 30 Z" fill="#9b9a9a"/><circle cx="36.5" cy="11.5" r="2.6" fill="#9b9a9a"/></svg>
<span class="t b" style="left:218px;top:424.9px;font-size:8.3px;color:#9d9c9c;transform:scaleX(0.9308);">Добавьте фото</span>

<div id="music"></div>
<div id="bottom"></div>
<svg style="left:246px;top:459px" width="12" height="12" viewBox="0 0 12 12"><path d="M4 2.2 L10.5 .8 V8 H9.4 V3.4 L5.1 4.4 V9.6 H4 Z" fill="#5fd24a" stroke="#2a9a24" stroke-width=".5"/><ellipse cx="3" cy="9.4" rx="2.4" ry="1.8" fill="#4ec43c"/><ellipse cx="8.3" cy="8" rx="2.4" ry="1.8" fill="#4ec43c"/></svg>
<span class="t b" style="left:263px;top:459.4px;font-size:8.8px;color:#f2f2f2;transform:scaleX(0.9234);">Дважды кликните для добавления музыки</span>
<div style="left:6px;top:482px;width:47px;height:19px;background:#2f2f2f"></div>
<div style="left:54px;top:482px;width:77px;height:19px;background:#464646;border-right:1px solid #3a3a3a"></div>
<div style="left:25.5px;top:481.5px;border-top:3.5px solid #696868;border-left:4.5px solid transparent;border-right:4.5px solid transparent"></div>
<span class="t " style="left:15px;top:486px;font-size:9px;color:#f0f0f0;transform:scaleX(0.8951);">Слайды</span>
<span class="t " style="left:62px;top:486px;font-size:9px;color:#e6e6e6;transform:scaleX(0.9525);">Шкала времени</span>

<div id="frameL"></div>
<div id="frameR"></div>
</div>
</body>
</html>
